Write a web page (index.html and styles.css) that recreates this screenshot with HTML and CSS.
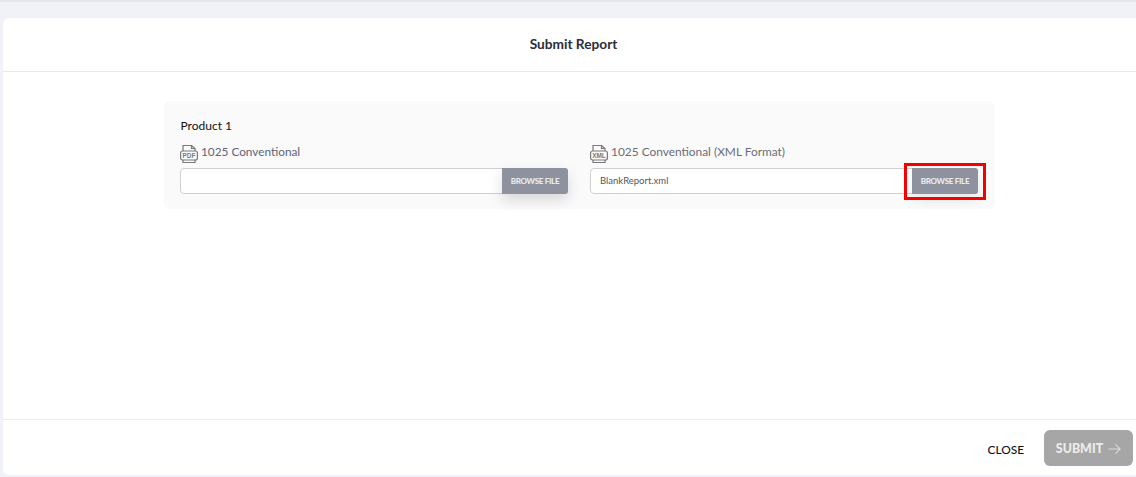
FILE: index.html
```html
<!DOCTYPE html>
<html lang="en">
<head>
<meta charset="utf-8">
<title>Submit Report</title>
<link rel="stylesheet" href="styles.css">
</head>
<body>
<div class="topline"></div>
<main class="modal">
  <header class="modal-head">Submit Report</header>
  <section class="modal-body">
    <div class="panel">
      <div class="product">Product 1</div>
      <div class="columns">
        <div class="col">
          <div class="label label-pdf">
            <svg class="file-icon" viewBox="0 0 18 20" width="18" height="20" fill="none" stroke="#77797d" stroke-width="1.2"><path d="M3 7V1.5h8.5L15 4.5V7M3 16v2.5h12V16"/><path d="M11.5 1.5V4.5H15"/><rect x="0.6" y="7" width="16.8" height="9" rx="2"/><text x="9" y="13.8" text-anchor="middle" class="icon-text">PDF</text></svg>
            <span>1025 Conventional</span>
          </div>
          <div class="file-field">
            <div class="file-name"></div>
            <button class="browse browse-shadow">BROWSE FILE</button>
          </div>
        </div>
        <div class="col">
          <div class="label label-xml">
            <svg class="file-icon" viewBox="0 0 18 20" width="18" height="20" fill="none" stroke="#77797d" stroke-width="1.2"><path d="M3 7V1.5h8.5L15 4.5V7M3 16v2.5h12V16"/><path d="M11.5 1.5V4.5H15"/><rect x="0.6" y="7" width="16.8" height="9" rx="2"/><text x="9" y="13.8" text-anchor="middle" class="icon-text">XML</text></svg>
            <span>1025 Conventional (XML Format)</span>
          </div>
          <div class="file-field">
            <div class="file-name">BlankReport.xml</div>
            <button class="browse browse-soft">BROWSE FILE</button>
            <div class="highlight"></div>
          </div>
        </div>
      </div>
    </div>
  </section>
  <footer class="modal-foot">
    <button class="close">CLOSE</button>
    <button class="submit">SUBMIT
      <svg viewBox="0 0 14 12" width="13" height="12" fill="none" stroke="#d9d9d9" stroke-width="1.2"><path d="M0.5 6H13M8 1l5 5-5 5"/></svg>
    </button>
  </footer>
</main>
</body>
</html>
```
FILE: styles.css
```css
* { box-sizing: border-box; }
html, body { height: 100%; }
body {
  margin: 0;
  background: #f1f2f8;
  font-family: Lato, "Open Sans", sans-serif;
  display: flex;
  flex-direction: column;
  overflow: hidden;
}
.topline { height: 2px; background: #e6e7ea; flex: none; }
.modal {
  margin: 16px 0 2px 3px;
  flex: 1;
  background: #fff;
  border-radius: 6px 0 0 6px;
  display: flex;
  flex-direction: column;
}
.modal-head {
  height: 54px;
  flex: none;
  border-bottom: 1px solid #e9e9ec;
  display: flex;
  align-items: center;
  justify-content: center;
  font-size: 13.7px;
  font-weight: 700;
  color: #2b2d3a;
  padding: 0 0 2px 8px;
}
.modal-body {
  flex: 1;
  padding: 29px 141px 0 161px;
}
.panel {
  height: 108px;
  background: #fafafa;
  border-radius: 6px;
  padding: 17px 17px 0 16px;
}
.product {
  font-size: 12px;
  line-height: 16px;
  color: #111;
  padding-left: 0.5px;
}
.columns {
  display: grid;
  grid-template-columns: 388px 388px;
  gap: 22px;
  margin-top: 8px;
}
.label {
  height: 19px;
  display: flex;
  align-items: center;
  gap: 3px;
  font-size: 11.8px;
  color: #6b6d78;
  margin-bottom: 7px;
}
.label-pdf { color: #5f6478; }
.label-xml { font-size: 11.9px; }
.file-icon { flex: none; position: relative; top: 2px; }
.icon-text {
  font-family: "Liberation Sans", sans-serif;
  font-size: 6.4px;
  font-weight: 700;
  fill: #77797d;
  stroke: none;
}
.file-field {
  position: relative;
  height: 26px;
  display: flex;
  background: #fff;
  border: 1px solid #d0d0d3;
  border-radius: 4px;
}
.file-name {
  flex: 1;
  font-size: 9.5px;
  line-height: 24px;
  padding-left: 9px;
  color: #55565e;
}
.browse {
  width: 66px;
  margin: -1px -1px -1px 0;
  border: 0;
  background: #8e929f;
  color: #e9eaee;
  font-family: Lato, sans-serif;
  font-size: 8px;
  font-weight: 900;
  letter-spacing: -0.3px;
  padding: 0 0 1px;
  border-radius: 0 3px 3px 0;
}
.browse-shadow { box-shadow: 0 6px 14px rgba(0, 0, 0, 0.14); }
.browse-soft { box-shadow: 0 6px 14px rgba(0, 0, 0, 0.08); }
.highlight {
  position: absolute;
  right: -9px;
  top: -6px;
  width: 82px;
  height: 37px;
  border: 3px solid #f50000;
}
.modal-foot {
  height: 56px;
  flex: none;
  border-top: 1px solid #ececef;
  display: flex;
  align-items: center;
  justify-content: flex-end;
  padding-right: 3px;
}
.close {
  border: 0;
  background: none;
  padding: 3px 0 0;
  margin-right: 20px;
  font-family: Lato, sans-serif;
  font-size: 11.9px;
  font-weight: 500;
  color: #111116;
}
.submit {
  width: 89px;
  height: 36px;
  border: 0;
  border-radius: 6px;
  background: #a6a6a6;
  color: #ececec;
  font-family: Lato, sans-serif;
  font-size: 12.4px;
  font-weight: 900;
  display: flex;
  align-items: center;
  justify-content: center;
  gap: 5px;
  padding: 2px 0 0;
}
```
